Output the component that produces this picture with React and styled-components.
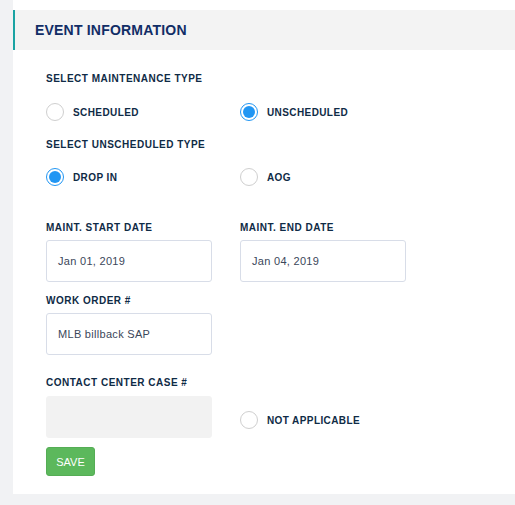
import React from "react";
import styled, { createGlobalStyle } from "styled-components";

const Global = createGlobalStyle`
  html, body { margin: 0; padding: 0; background: #f1f2f4; }
  body { font-family: "Liberation Sans", Arial, sans-serif; }
`;

const Page = styled.div`
  padding-left: 13px;
  width: 515px;
  box-sizing: border-box;
`;

const Card = styled.div`
  background: #fff;
  padding: 10px 0 18px;
`;

const Header = styled.div`
  height: 40px;
  background: #f3f3f3;
  border-left: 2px solid #1aa3a3;
  display: flex;
  align-items: center;
  padding-left: 20px;
  font-size: 14px;
  font-weight: 700;
  color: #112d66;
  letter-spacing: 0.2px;
`;

const Body = styled.div`
  padding: 0 33px;
`;

const Label = styled.div`
  font-size: 10px;
  line-height: 12px;
  font-weight: 700;
  color: #0f2b46;
  letter-spacing: 0.5px;
  text-transform: uppercase;
  margin-top: ${(p) => p.$top || 0}px;
`;

const Row = styled.div`
  display: grid;
  grid-template-columns: 166px 166px;
  column-gap: 28px;
  align-items: ${(p) => p.$align || "center"};
  margin-top: ${(p) => p.$top || 0}px;
`;

const Col = styled.div`
  display: flex;
  flex-direction: column;
  padding-top: ${(p) => p.$pad || 0}px;
`;

const RadioItem = styled.label`
  display: flex;
  align-items: center;
  gap: 9px;
  font-size: 10px;
  font-weight: 700;
  color: #0f2b46;
  letter-spacing: 0.4px;
  height: 18px;
`;

const Circle = styled.span`
  width: 18px;
  height: 18px;
  box-sizing: border-box;
  border-radius: 50%;
  border: 1px solid ${(p) => (p.$on ? "#2196f3" : "#cfcfcf")};
  display: flex;
  align-items: center;
  justify-content: center;
  background: #fff;
  &::after {
    content: "";
    width: 12px;
    height: 12px;
    border-radius: 50%;
    background: ${(p) => (p.$on ? "#2196f3" : "transparent")};
  }
`;

const Input = styled.div`
  height: 42px;
  box-sizing: border-box;
  border: 1px solid ${(p) => (p.$disabled ? "#f2f2f2" : "#d8dde8")};
  background: ${(p) => (p.$disabled ? "#f2f2f2" : "#fff")};
  border-radius: 3px;
  display: flex;
  align-items: center;
  padding-left: 11px;
  font-size: 11px;
  color: #3b475a;
  letter-spacing: 0.3px;
  margin-top: ${(p) => (p.$gap != null ? p.$gap : 6)}px;
`;

const SaveButton = styled.button`
  margin-top: 9px;
  width: 49px;
  height: 29px;
  background: #5cb85c;
  border: 1px solid #55ad55;
  border-radius: 3px;
  color: #fff;
  font-family: "Liberation Sans", Arial, sans-serif;
  font-size: 11px;
  padding: 0;
  display: block;
`;

const Radio = ({ on, children }) => (
  <RadioItem>
    <Circle $on={on} />
    {children}
  </RadioItem>
);

export default function App() {
  return (
    <>
      <Global />
      <Page>
        <Card>
          <Header>EVENT INFORMATION</Header>
          <Body>
            <Label $top={23}>Select Maintenance Type</Label>
            <Row $top={18}>
              <Radio>SCHEDULED</Radio>
              <Radio on>UNSCHEDULED</Radio>
            </Row>
            <Label $top={18}>Select Unscheduled Type</Label>
            <Row $top={17}>
              <Radio on>DROP IN</Radio>
              <Radio>AOG</Radio>
            </Row>
            <Row $top={36}>
              <Col>
                <Label>Maint. Start Date</Label>
                <Input>Jan 01, 2019</Input>
              </Col>
              <Col>
                <Label>Maint. End Date</Label>
                <Input>Jan 04, 2019</Input>
              </Col>
            </Row>
            <Row $top={13}>
              <Col>
                <Label>Work Order #</Label>
                <Input>MLB billback SAP</Input>
              </Col>
            </Row>
            <Label $top={22}>Contact Center Case #</Label>
            <Row $align="start">
              <Input $disabled $gap={7} />
              <Col $pad={22}>
                <Radio>NOT APPLICABLE</Radio>
              </Col>
            </Row>
            <SaveButton>SAVE</SaveButton>
          </Body>
        </Card>
      </Page>
    </>
  );
}
